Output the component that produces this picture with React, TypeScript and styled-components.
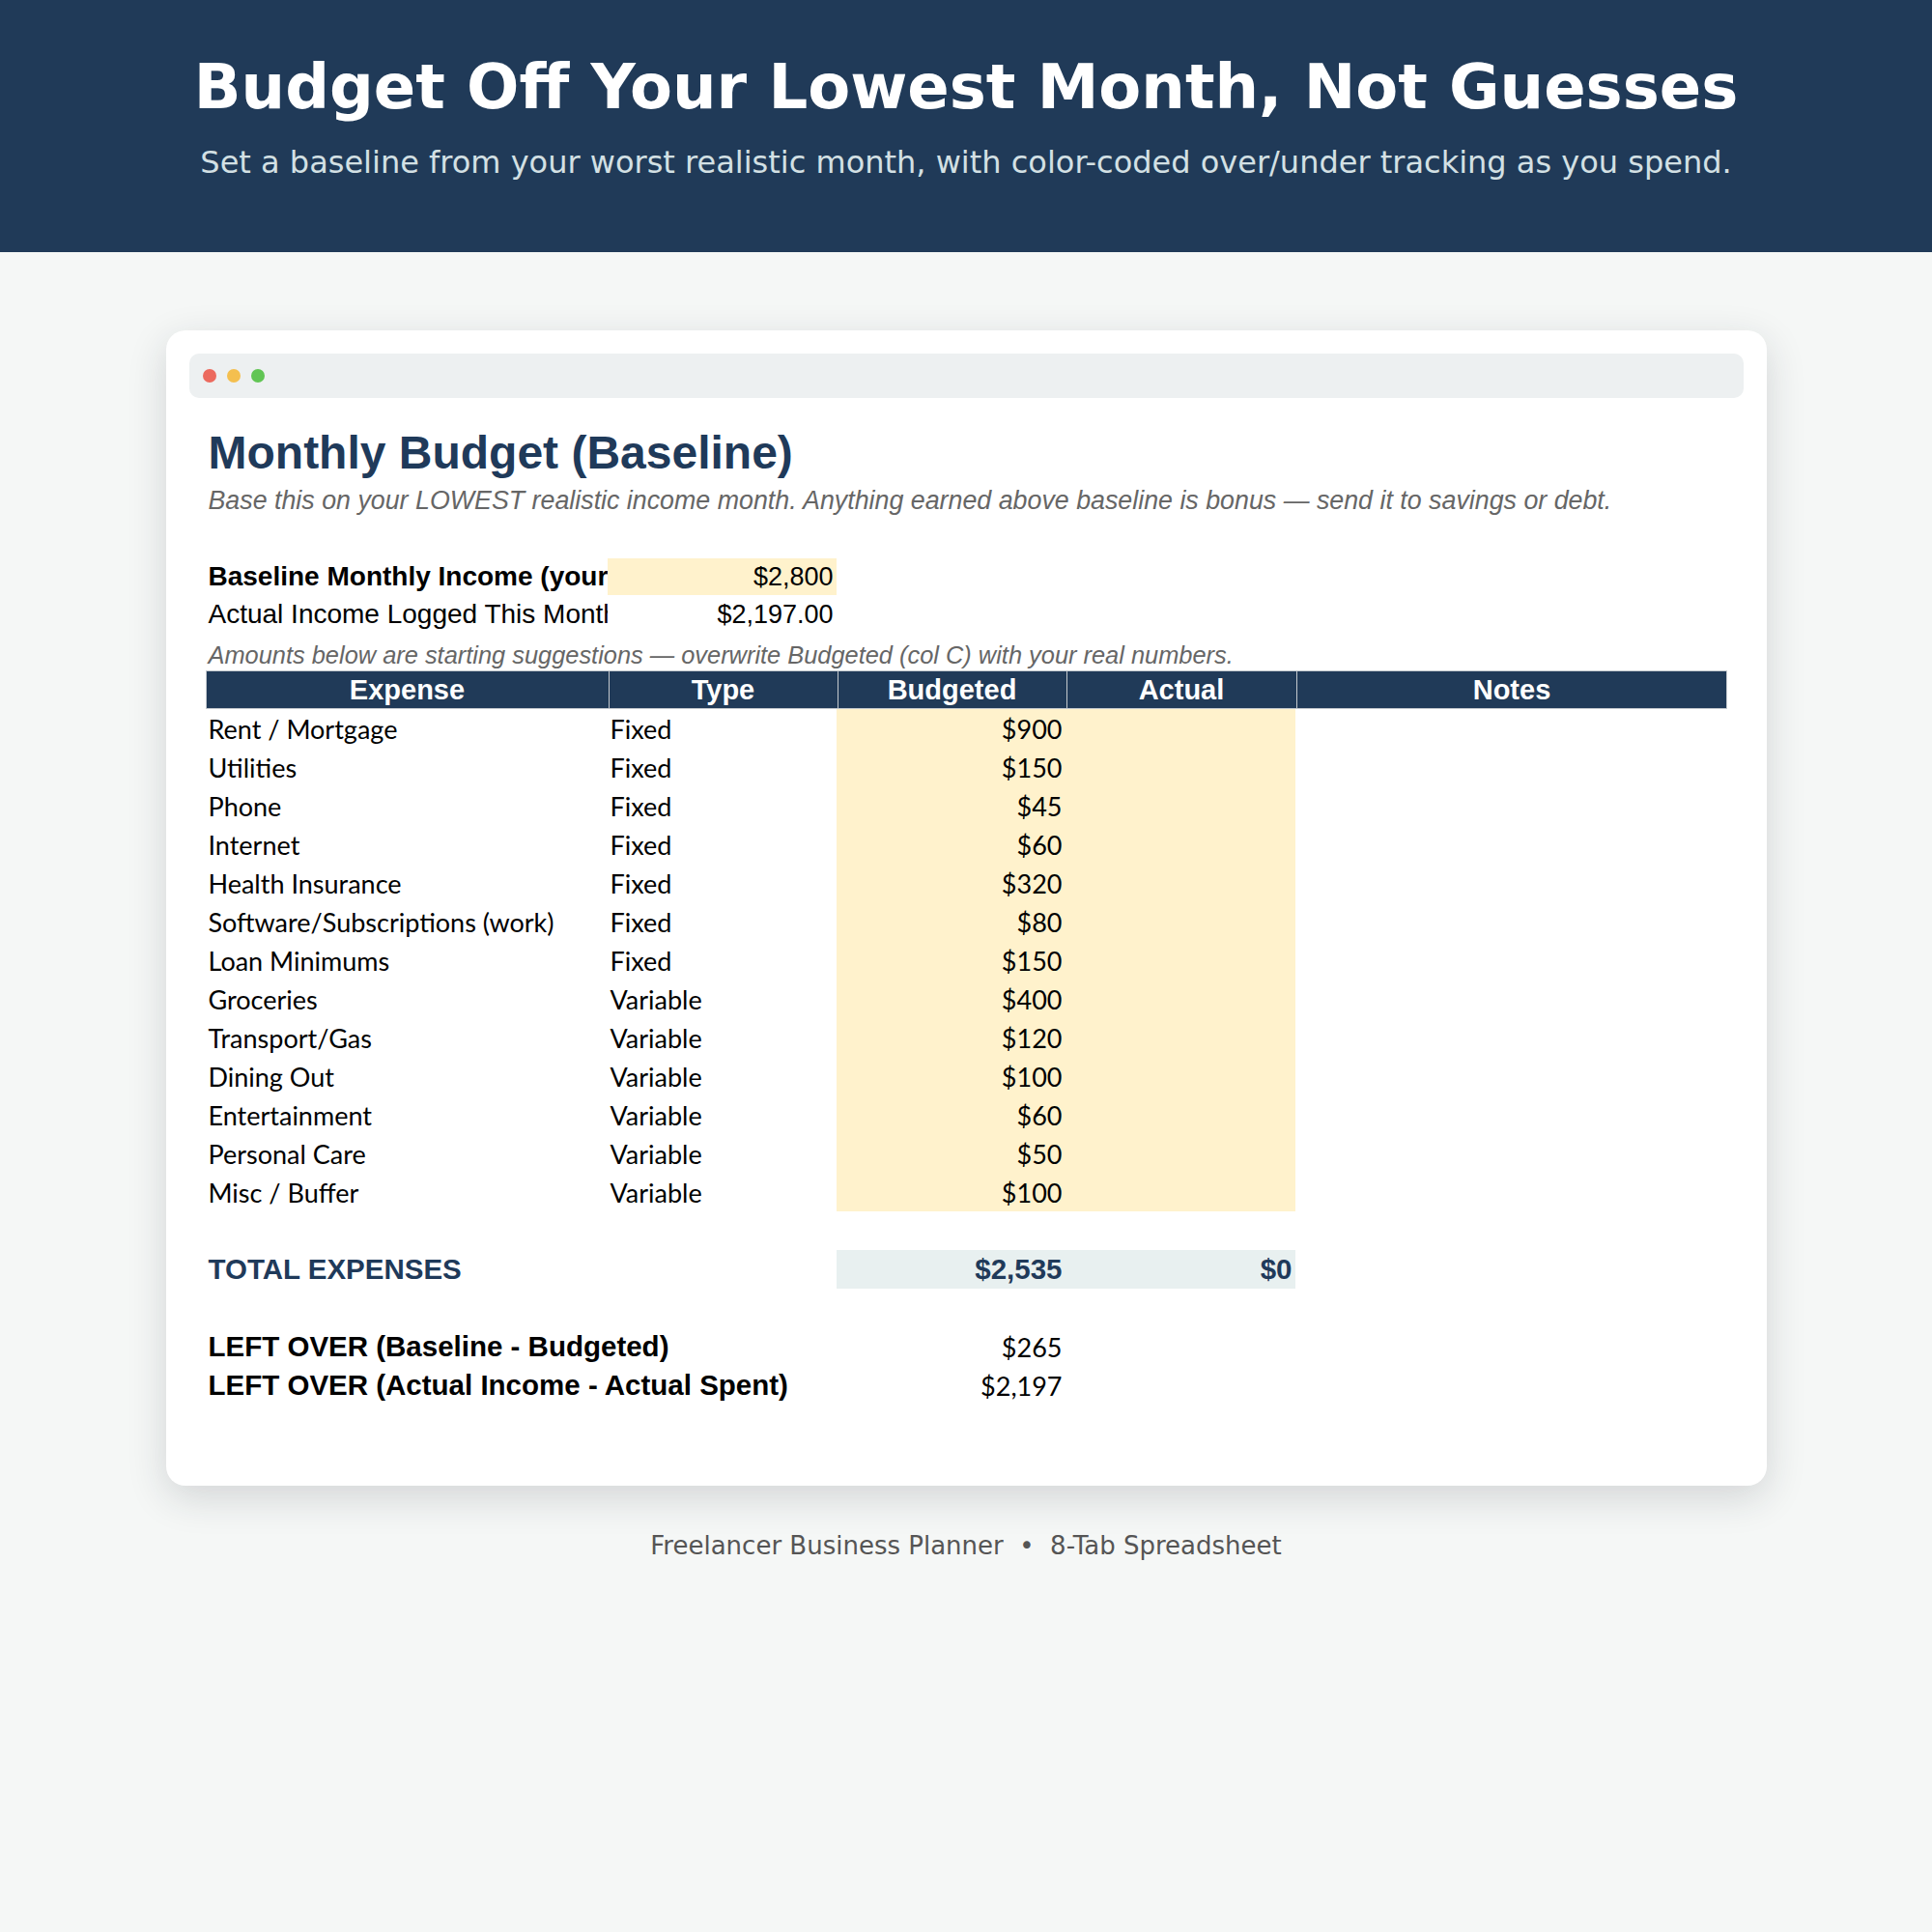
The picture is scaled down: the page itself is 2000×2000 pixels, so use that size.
import styled, { createGlobalStyle } from "styled-components";

const GlobalStyle = createGlobalStyle`
  html, body {
    margin: 0;
    padding: 0;
    background: #f5f7f6;
  }
  * {
    box-sizing: border-box;
  }
`;

const COLUMNS = "416px 237px 237px 238px 446px";

interface Expense {
  name: string;
  type: "Fixed" | "Variable";
  budgeted: string;
}

const expenses: Expense[] = [
  { name: "Rent / Mortgage", type: "Fixed", budgeted: "$900" },
  { name: "Utilities", type: "Fixed", budgeted: "$150" },
  { name: "Phone", type: "Fixed", budgeted: "$45" },
  { name: "Internet", type: "Fixed", budgeted: "$60" },
  { name: "Health Insurance", type: "Fixed", budgeted: "$320" },
  { name: "Software/Subscriptions (work)", type: "Fixed", budgeted: "$80" },
  { name: "Loan Minimums", type: "Fixed", budgeted: "$150" },
  { name: "Groceries", type: "Variable", budgeted: "$400" },
  { name: "Transport/Gas", type: "Variable", budgeted: "$120" },
  { name: "Dining Out", type: "Variable", budgeted: "$100" },
  { name: "Entertainment", type: "Variable", budgeted: "$60" },
  { name: "Personal Care", type: "Variable", budgeted: "$50" },
  { name: "Misc / Buffer", type: "Variable", budgeted: "$100" },
];

const App = () => {
  return (
    <Page>
      <GlobalStyle />
      <Hero>
        <HeroTitle>Budget Off Your Lowest Month, Not Guesses</HeroTitle>
        <HeroSubtitle>
          Set a baseline from your worst realistic month, with color-coded
          over/under tracking as you spend.
        </HeroSubtitle>
      </Hero>

      <Main>
        <Card>
          <WindowBar>
            <Dot $color="#ec6a5e" />
            <Dot $color="#f4bf4f" />
            <Dot $color="#61c554" />
          </WindowBar>

          <Sheet>
            <SheetTitle>Monthly Budget (Baseline)</SheetTitle>
            <SheetNote>
              Base this on your LOWEST realistic income month. Anything earned
              above baseline is bonus — send it to savings or debt.
            </SheetNote>
            <Spacer />

            <Row $height={38}>
              <Cell $bold $size={28}>
                Baseline Monthly Income (your lowest month)
              </Cell>
              <Cell $align="right" $bg="#fff2cc" $size={27}>
                $2,800
              </Cell>
            </Row>
            <Row $height={40}>
              <Cell $size={28}>Actual Income Logged This Month</Cell>
              <Cell $align="right" $size={27}>
                $2,197.00
              </Cell>
            </Row>
            <Row $height={38}>
              <WideNote>
                Amounts below are starting suggestions — overwrite Budgeted (col
                C) with your real numbers.
              </WideNote>
            </Row>

            <HeaderRow>
              <HeaderCell>Expense</HeaderCell>
              <HeaderCell>Type</HeaderCell>
              <HeaderCell>Budgeted</HeaderCell>
              <HeaderCell>Actual</HeaderCell>
              <HeaderCell>Notes</HeaderCell>
            </HeaderRow>

            {expenses.map((e) => (
              <Row key={e.name}>
                <Cell $font="lato">{e.name}</Cell>
                <Cell $font="lato">{e.type}</Cell>
                <Cell $font="lato" $align="right" $bg="#fff2cc">
                  {e.budgeted}
                </Cell>
                <Cell $bg="#fff2cc" />
                <Cell />
              </Row>
            ))}

            <Row />
            <Row>
              <Cell $bold $color="#1f3a5a">
                TOTAL EXPENSES
              </Cell>
              <Cell />
              <Cell $bold $color="#1f3a5a" $align="right" $bg="#e8f0f0">
                $2,535
              </Cell>
              <Cell $bold $color="#1f3a5a" $align="right" $bg="#e8f0f0">
                $0
              </Cell>
            </Row>
            <Row />
            <Row>
              <Cell $bold $overflow>
                LEFT OVER (Baseline - Budgeted)
              </Cell>
              <Cell />
              <Cell $font="lato" $align="right">
                $265
              </Cell>
            </Row>
            <Row>
              <Cell $bold $overflow>
                LEFT OVER (Actual Income - Actual Spent)
              </Cell>
              <Cell />
              <Cell $font="lato" $align="right">
                $2,197
              </Cell>
            </Row>
          </Sheet>
        </Card>

        <Footer>Freelancer Business Planner &nbsp;•&nbsp; 8-Tab Spreadsheet</Footer>
      </Main>
    </Page>
  );
};

const Page = styled.div`
  width: 2000px;
  min-height: 2000px;
  background: #f5f7f6;
`;

const Hero = styled.header`
  height: 261px;
  padding-top: 52px;
  background: #203a58;
  text-align: center;
`;

const HeroTitle = styled.h1`
  margin: 0;
  font-family: "DejaVu Sans", sans-serif;
  font-size: 64px;
  font-weight: 700;
  line-height: 1.2;
  color: #ffffff;
`;

const HeroSubtitle = styled.p`
  margin: 20px 0 0;
  font-family: "DejaVu Sans", sans-serif;
  font-size: 32px;
  line-height: 1.2;
  color: #d3e0e4;
`;

const Main = styled.main`
  display: flex;
  flex-direction: column;
  align-items: center;
  padding-top: 81px;
`;

const Card = styled.section`
  width: 1657px;
  padding: 24px 24px 84px;
  background: #ffffff;
  border-radius: 20px;
  box-shadow: 0 12px 40px rgba(30, 40, 50, 0.16);
`;

const WindowBar = styled.div`
  display: flex;
  align-items: center;
  gap: 11px;
  height: 46px;
  padding-left: 14px;
  background: #edf0f1;
  border-radius: 10px;
`;

const Dot = styled.span<{ $color: string }>`
  width: 14px;
  height: 14px;
  border-radius: 50%;
  background: ${({ $color }) => $color};
`;

const Sheet = styled.div`
  padding: 29px 17px 0;
`;

const SheetTitle = styled.h2`
  margin: 0;
  padding-left: 3px;
  font-family: "Liberation Sans", Arial, sans-serif;
  font-size: 48px;
  font-weight: 700;
  line-height: 55px;
  color: #1f3a5a;
`;

const SheetNote = styled.p`
  margin: 7px 0 0;
  padding-left: 3px;
  font-family: "Liberation Sans", Arial, sans-serif;
  font-size: 26.8px;
  font-style: italic;
  line-height: 30px;
  color: #666666;
  white-space: nowrap;
`;

const Spacer = styled.div`
  height: 45px;
`;

const Row = styled.div<{ $height?: number }>`
  display: grid;
  grid-template-columns: ${COLUMNS};
  height: ${({ $height }) => $height ?? 40}px;
`;

const Cell = styled.div<{
  $align?: "left" | "right";
  $bg?: string;
  $bold?: boolean;
  $color?: string;
  $font?: "arial" | "lato";
  $overflow?: boolean;
  $size?: number;
}>`
  display: flex;
  align-items: center;
  justify-content: ${({ $align }) => ($align === "right" ? "flex-end" : "flex-start")};
  padding: 0 3px;
  overflow: ${({ $overflow }) => ($overflow ? "visible" : "hidden")};
  white-space: nowrap;
  background: ${({ $bg }) => $bg || "transparent"};
  font-family: ${({ $font }) =>
    $font === "lato" ? "Lato, sans-serif" : '"Liberation Sans", Arial, sans-serif'};
  font-size: ${({ $bold, $font, $size }) =>
    $size ? `${$size}px` : $font === "lato" ? "27px" : $bold ? "29.5px" : "28px"};
  font-weight: ${({ $bold }) => ($bold ? 700 : 400)};
  color: ${({ $color }) => $color || "#000000"};
`;

const WideNote = styled.div`
  grid-column: 1 / -1;
  display: flex;
  align-items: flex-end;
  padding: 0 3px 1px;
  font-family: "Liberation Sans", Arial, sans-serif;
  font-size: 25.4px;
  font-style: italic;
  color: #666666;
  white-space: nowrap;
`;

const HeaderRow = styled.div`
  display: grid;
  grid-template-columns: ${COLUMNS};
  height: 40px;
  border: 1px solid #c4c9ce;
  background: #203a58;
`;

const HeaderCell = styled.div`
  display: flex;
  align-items: center;
  justify-content: center;
  border-left: 1px solid #c4c9ce;
  font-family: "Liberation Sans", Arial, sans-serif;
  font-size: 29px;
  font-weight: 700;
  color: #ffffff;

  &:first-child {
    border-left: none;
  }
`;

const Footer = styled.footer`
  margin-top: 44px;
  font-family: "DejaVu Sans", sans-serif;
  font-size: 26px;
  line-height: 36px;
  color: #555555;
`;

export default App;
